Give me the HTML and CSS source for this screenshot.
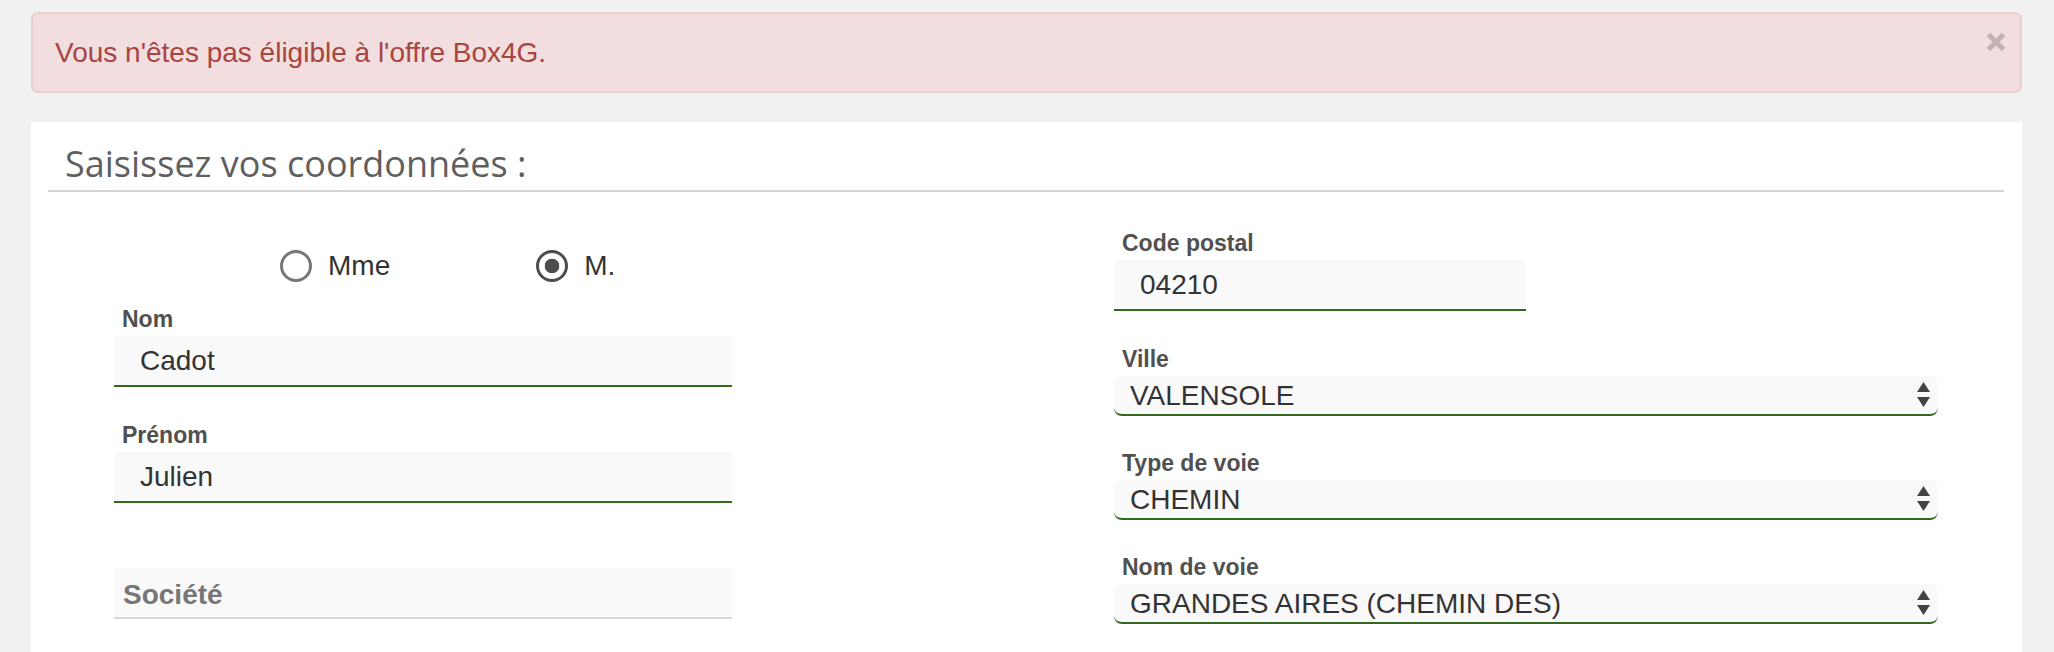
FILE: index.html
```html
<!DOCTYPE html>
<html lang="fr">
<head>
  <meta charset="UTF-8" />
  <meta name="viewport" content="width=device-width, initial-scale=1.0"/>
  <title>Box4G - Coordonnées</title>
  <link rel="stylesheet" href="styles.css">
</head>
<body>

  <div class="alert">
    <span class="alert-text">Vous n'êtes pas éligible à l'offre Box4G.</span>
    <button class="close" type="button" aria-label="Fermer">
      <svg width="20" height="20" viewBox="0 0 20 20">
        <path d="M2.5 2.5L17.5 17.5M17.5 2.5L2.5 17.5" stroke="#c2b2b2" stroke-width="5" fill="none"/>
      </svg>
    </button>
  </div>

  <div class="panel">
    <h3 class="panel-title">Saisissez vos coordonnées :</h3>

    <form class="form-row">
      <div class="col">
        <div class="civility">
          <label class="radio"><input type="radio" name="civilite" value="mme"> Mme</label>
          <label class="radio"><input type="radio" name="civilite" value="m" checked> M.</label>
        </div>

        <div class="field wide">
          <label for="nom">Nom</label>
          <input id="nom" type="text" value="Cadot">
        </div>

        <div class="field wide">
          <label for="prenom">Prénom</label>
          <input id="prenom" type="text" value="Julien">
        </div>

        <div class="field wide empty">
          <label for="societe" class="inside">Société</label>
          <input id="societe" type="text">
        </div>
      </div>

      <div class="col">
        <div class="field half">
          <label for="cp">Code postal</label>
          <input id="cp" type="text" value="04210">
        </div>

        <div class="field select-field">
          <label for="ville">Ville</label>
          <div class="select-wrap">
            <select id="ville">
              <option>VALENSOLE</option>
            </select>
            <svg class="arrows" width="13" height="25" viewBox="0 0 13 25">
              <path d="M0 10L6.5 0L13 10Z M0 15L13 15L6.5 25Z" fill="#444"/>
            </svg>
          </div>
        </div>

        <div class="field select-field">
          <label for="typevoie">Type de voie</label>
          <div class="select-wrap">
            <select id="typevoie">
              <option>CHEMIN</option>
            </select>
            <svg class="arrows" width="13" height="25" viewBox="0 0 13 25">
              <path d="M0 10L6.5 0L13 10Z M0 15L13 15L6.5 25Z" fill="#444"/>
            </svg>
          </div>
        </div>

        <div class="field select-field">
          <label for="nomvoie">Nom de voie</label>
          <div class="select-wrap">
            <select id="nomvoie">
              <option>GRANDES AIRES (CHEMIN DES)</option>
            </select>
            <svg class="arrows" width="13" height="25" viewBox="0 0 13 25">
              <path d="M0 10L6.5 0L13 10Z M0 15L13 15L6.5 25Z" fill="#444"/>
            </svg>
          </div>
        </div>
      </div>
    </form>
  </div>

</body>
</html>
```

FILE: styles.css
```css
* {
  box-sizing: border-box;
}

body {
  margin: 0;
  padding: 12px 32px 0 31px;
  font-family: 'Liberation Sans', Arial, sans-serif;
  background: #f1f1f1;
  color: #333;
}

.alert {
  display: flex;
  justify-content: space-between;
  align-items: flex-start;
  padding: 18px 14px 18px 22px;
  background: #f2dede;
  border: 2px solid #ebcfcf;
  border-radius: 7px;
  color: #a94442;
  font-size: 28px;
  line-height: 41px;
}

.close {
  display: block;
  padding: 0;
  margin: 0;
  border: none;
  background: none;
  line-height: 0;
  cursor: pointer;
}

.panel {
  margin-top: 29px;
  background: white;
  padding: 18px 18px 60px 17px;
}

.panel-title {
  margin: 0;
  padding: 0 0 2px 17px;
  font-family: 'Open Sans', sans-serif;
  font-weight: 400;
  font-size: 36px;
  line-height: 48px;
  color: #5f5f5f;
  border-bottom: 2px solid #d4d4d4;
}

.form-row {
  display: grid;
  grid-template-columns: 1fr 1fr;
  column-gap: 176px;
  padding: 38px 66px 0;
}

.civility {
  display: flex;
  align-items: center;
  gap: 146px;
  height: 72px;
  margin-bottom: 4px;
  padding-left: 166px;
}

.radio {
  display: flex;
  align-items: center;
  gap: 16px;
  font-size: 28px;
  color: #333;
}

.radio input {
  appearance: none;
  margin: 0;
  width: 32px;
  height: 32px;
  border: 3px solid #777;
  border-radius: 50%;
  background: white;
}

.radio input:checked {
  border-color: #4d4d4d;
  background: radial-gradient(circle, #4d4d4d 0 7px, white 7.6px);
}

.field {
  margin-bottom: 35px;
  position: relative;
}

.field label {
  display: block;
  padding-left: 8px;
  font-size: 23px;
  font-weight: 700;
  line-height: 27px;
  margin-bottom: 3px;
  color: #505050;
}

.field.wide input {
  width: 75%;
}

.field.half input {
  width: 50%;
}

.field input {
  display: block;
  height: 51px;
  padding: 0 26px;
  border: none;
  border-bottom: 2px solid #33691e;
  background: #f9f9f9;
  font-family: inherit;
  font-size: 28px;
  color: #333;
  outline: none;
}

.field.empty {
  padding-top: 30px;
}

.field.empty input {
  border-bottom-color: #d9d9d9;
}

.field label.inside {
  position: absolute;
  left: 9px;
  top: 43px;
  padding: 0;
  margin: 0;
  font-size: 28px;
  line-height: 28px;
  color: #777;
}

.select-field {
  margin-bottom: 34px;
}

.select-wrap {
  position: relative;
}

.select-wrap select {
  appearance: none;
  display: block;
  width: 100%;
  height: 40px;
  padding: 0 40px 0 16px;
  border: none;
  border-bottom: 2px solid #33691e;
  border-radius: 8px;
  background: #f9f9f9;
  font-family: inherit;
  font-size: 28px;
  color: #333;
  outline: none;
}

.arrows {
  position: absolute;
  right: 8px;
  top: 6px;
  pointer-events: none;
}
```
